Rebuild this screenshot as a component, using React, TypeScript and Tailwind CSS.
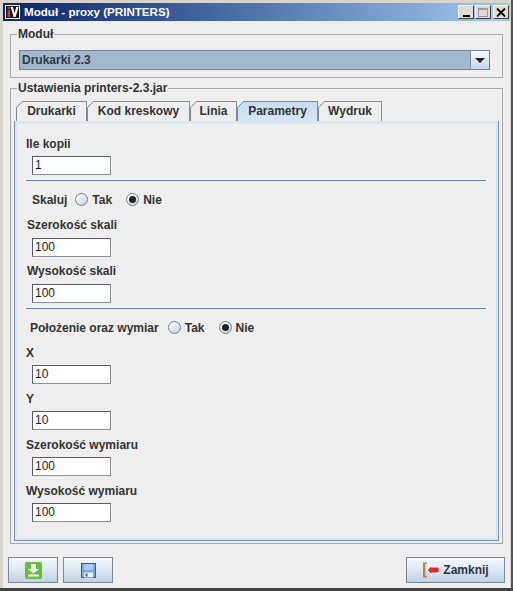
import React from "react";

const font = "font-['Liberation_Sans',Arial,sans-serif]";

const tabs = [
  { name: "Drukarki", width: "w-[71px]" },
  { name: "Kod kreskowy", width: "w-[103px]" },
  { name: "Linia", width: "w-[47px]" },
  { name: "Parametry", width: "w-[81px]", active: true },
  { name: "Wydruk", width: "w-[64px]" },
];

const Field: React.FC<{ label: string; value: string; labelClass?: string; top: string; gap?: string }> = ({
  label,
  value,
  labelClass = "ml-[9px]",
  top,
  gap = "mt-[4px]",
}) => (
  <div className="flex flex-col">
    <div className={`${labelClass} ${top} h-[15px] leading-[15px] text-[12px] font-bold text-[#333333]`}>
      {label}
    </div>
    <div
      className={`ml-[15px] ${gap} w-[79px] h-[19px] bg-white border border-[#8a8f96] border-l-[#555b63] border-t-[#555b63] pl-[2px] text-[12px] leading-[17px] text-[#222222]`}
    >
      {value}
    </div>
  </div>
);

const Radio: React.FC<{ checked?: boolean }> = ({ checked }) => (
  <span className="flex items-center justify-center w-[13px] h-[13px] rounded-full border border-[#6f7d8c] bg-gradient-to-br from-[#ffffff] to-[#c6d3e0]">
    {checked && <span className="block w-[7px] h-[7px] rounded-full bg-[#222222]" />}
  </span>
);

const RadioRow: React.FC<{ label: string; ml: string; gap: string; top: string; between: string }> = ({
  label,
  ml,
  gap,
  top,
  between,
}) => (
  <div className={`flex items-center h-[15px] ${ml} ${top} text-[12px] font-bold text-[#333333]`}>
    <span>{label}</span>
    <span className={`${gap} mr-[4px]`}>
      <Radio />
    </span>
    <span>Tak</span>
    <span className={`${between} mr-[4px]`}>
      <Radio checked />
    </span>
    <span>Nie</span>
  </div>
);

const Separator: React.FC<{ top: string }> = ({ top }) => (
  <div className={`ml-[9px] mr-[10px] h-px bg-[#6d87ad] ${top}`} />
);

const FootButton: React.FC<{ className: string; children: React.ReactNode }> = ({ className, children }) => (
  <div
    className={`${className} h-[26px] flex items-center justify-center border border-[#7b8794] bg-gradient-to-b from-[#f4f8fc] via-[#dde8f3] to-[#bcd0e6] text-[12px] font-bold text-[#2a3340]`}
  >
    {children}
  </div>
);

const TitleButton: React.FC<{ className?: string; children: React.ReactNode }> = ({ className = "", children }) => (
  <div
    className={`${className} w-[16px] h-[14px] bg-[#dedbd4] border border-[#f8f8f8] border-r-[#404040] border-b-[#404040] flex items-center justify-center`}
  >
    {children}
  </div>
);

const App: React.FC = () => {
  return (
    <div className={`${font} w-[513px] h-[591px] bg-[#d8d4cc] flex flex-col overflow-hidden`}>
      <div className="flex-1 flex">
        <div className="flex-1 ml-[3px] mr-[1px] mt-[3px] flex flex-col bg-[#eeeeee]">
          {/* title bar */}
          <div className="h-[18px] flex items-center pl-[2px] pr-[1px] bg-gradient-to-r from-[#0a246a] to-[#a6caf0]">
            <svg width="15" height="14" viewBox="0 0 15 14" className="shrink-0">
              <rect width="15" height="14" fill="#f4f4f4" />
              <rect x="1" y="1" width="13" height="12" fill="#111111" />
              <rect x="2.5" y="2" width="2.5" height="2" fill="#e03030" />
              <rect x="2.5" y="5" width="2.5" height="7" fill="#e03030" />
              <path d="M5.6 2 L8 2 L9.6 8.5 L11.2 2 L13.6 2 L10.6 12 L8.6 12 Z" fill="#ffffff" />
            </svg>
            <span className="ml-[4px] text-[11.6px] font-bold text-white">Moduł - proxy (PRINTERS)</span>
            <div className="ml-auto flex items-center">
              <TitleButton>
                <div className="w-[7px] h-[2px] bg-black mt-[7px]" />
              </TitleButton>
              <TitleButton className="ml-[1px]">
                <div className="w-[10px] h-[9px] border border-[#9a9a9a] border-t-2" />
              </TitleButton>
              <TitleButton className="ml-[2px]">
                <svg width="10" height="9" viewBox="0 0 10 9">
                  <path d="M1 0.5 L9 8.5 M9 0.5 L1 8.5" stroke="#000000" strokeWidth="1.8" />
                </svg>
              </TitleButton>
            </div>
          </div>

          {/* Moduł group */}
          <div className="relative ml-[7px] mr-[7px] mt-[13px] h-[44px] border border-[#a9a9a9] px-[8px] pt-[15px]">
            <span className="absolute left-[6px] top-[-8px] bg-[#eeeeee] px-px text-[12px] leading-[15px] font-bold text-[#333333]">
              Moduł
            </span>
            <div className="w-[471px] h-[20px] flex border border-[#6f8296] bg-[#a3b8cc]">
              <div className="flex-1 pl-[2px] text-[12px] leading-[18px] font-bold text-[#2f3a46]">Drukarki 2.3</div>
              <div className="w-[19px] flex items-center justify-center border-l border-[#7f8fa0] bg-gradient-to-b from-[#f6f9fc] to-[#c5d6e8]">
                <div className="w-0 h-0 border-l-[5px] border-r-[5px] border-t-[5px] border-l-transparent border-r-transparent border-t-[#222222]" />
              </div>
            </div>
          </div>

          {/* Ustawienia group */}
          <div className="relative ml-[7px] mr-[7px] mt-[10px] h-[456px] border border-[#a9a9a9] pl-[3px] pr-[3px] pt-[12px]">
            <span className="absolute left-[6px] top-[-8px] bg-[#eeeeee] px-px text-[12px] leading-[15px] font-bold text-[#333333]">
              Ustawienia printers-2.3.jar
            </span>
            <div className="flex pl-[2px] h-[20px] items-end">
              {tabs.map((t) => (
                <div
                  key={t.name}
                  className={`${t.width} relative h-[20px] flex items-center justify-center pb-[2px] border border-b-0 border-[#7f8b98] text-[12px] font-bold text-[#333333] ${
                    t.active ? "bg-gradient-to-b from-[#c6dbf2] to-[#d6e6f6]" : "bg-[#eeeeee]"
                  }`}
                >
                  <svg width="7" height="7" viewBox="0 0 7 7" className="absolute left-[-1px] top-[-1px]">
                    <path d="M0 0 H7 L0 7 Z" fill="#eeeeee" />
                    <path d="M0 7 L7 0" stroke="#7f8b98" strokeWidth="1" />
                  </svg>
                  {t.name}
                </div>
              ))}
            </div>
            <div className="h-[420px] border border-[#7f93b3] border-t-0 bg-[#d7e5f4] p-[2px] pt-[3px]">
              <div className="h-full bg-[#eeeeee] flex flex-col">
                <Field label="Ile kopii" value="1" top="mt-[13px]" />
                <Separator top="mt-[5px]" />
                <RadioRow label="Skaluj" ml="ml-[15px]" gap="ml-[8px]" between="ml-[14px]" top="mt-[11px]" />
                <Field label="Szerokość skali" value="100" labelClass="ml-[10px]" top="mt-[11px]" gap="mt-[5px]" />
                <Field label="Wysokość skali" value="100" labelClass="ml-[10px]" top="mt-[7px]" gap="mt-[5px]" />
                <Separator top="mt-[5px]" />
                <RadioRow label="Położenie oraz wymiar" ml="ml-[13px]" gap="ml-[9px]" between="ml-[14px]" top="mt-[11px]" />
                <Field label="X" value="10" top="mt-[11px]" />
                <Field label="Y" value="10" top="mt-[8px]" />
                <Field label="Szerokość wymiaru" value="100" top="mt-[8px]" />
                <Field label="Wysokość wymiaru" value="100" top="mt-[8px]" />
              </div>
            </div>
          </div>

          {/* footer */}
          <div className="flex items-center ml-[5px] mr-[5px] mt-[13px]">
            <FootButton className="w-[50px]">
              <svg width="17" height="17" viewBox="0 0 17 17">
                <rect width="17" height="17" rx="2" fill="#67bb3f" />
                <path d="M6 2 H11 V7 H14 L8.5 11.5 L3 7 H6 Z" fill="#ffffff" />
                <rect x="3" y="12.5" width="11" height="2" fill="#ffffff" />
              </svg>
            </FootButton>
            <FootButton className="w-[50px] ml-[5px]">
              <svg width="15" height="15" viewBox="0 0 15 15">
                <rect width="15" height="15" fill="#2c5cc0" />
                <rect x="1" y="1" width="13" height="13" fill="#7ea8e4" />
                <rect x="3" y="1" width="9" height="6" fill="#a9c8f2" />
                <rect x="3" y="9.5" width="9" height="5" fill="#eef3fb" />
                <rect x="4.5" y="10.5" width="2" height="3" fill="#2c5cc0" />
              </svg>
            </FootButton>
            <FootButton className="w-[99px] ml-auto gap-[3px]">
              <svg width="18" height="16" viewBox="0 0 18 16">
                <path d="M1 0.5 H5 V2 H3.4 V14 H5 V15.5 H1 Z" fill="#b8843e" />
                <path d="M4 8 L10 2 V4.6 H17.5 V11.4 H10 V14 Z" fill="#ffffff" />
                <path d="M5.6 8 L9.2 4.2 V5.6 H16.5 V10.4 H9.2 V11.8 Z" fill="#e8242e" />
              </svg>
              <span>Zamknij</span>
            </FootButton>
          </div>
        </div>
        <div className="w-[2px] bg-[#555555]" />
      </div>
      <div className="h-[3px] bg-[#444444]" />
    </div>
  );
};

export default App;
